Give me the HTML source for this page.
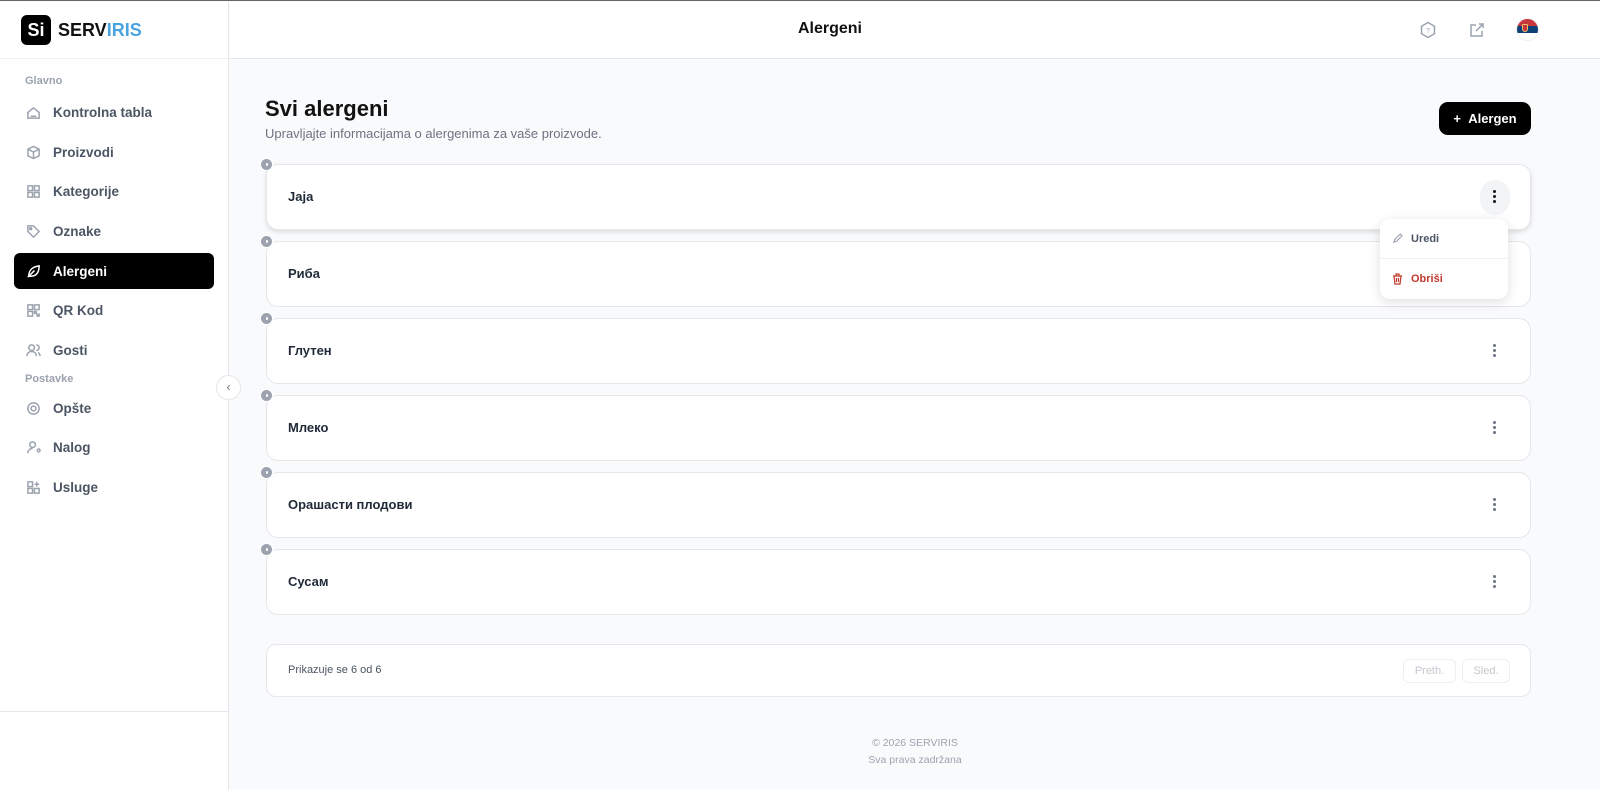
<!DOCTYPE html>
<html><head><meta charset="utf-8"><style>
*{box-sizing:border-box;margin:0;padding:0}
body{width:1600px;height:789px;overflow:hidden;font-family:"Liberation Sans",sans-serif;background:#f9fafb;position:relative;border-top:1px solid #666}
.side{position:absolute;left:0;top:1px;width:229px;height:788px;background:#fff;border-right:1px solid #e5e7eb}
.logo{height:57px;border-bottom:1px solid #eef0f2;display:flex;align-items:center;padding-left:21px}
.lb{width:30px;height:30px;background:#000;border-radius:6px;color:#fff;font-weight:bold;font-size:18px;display:flex;align-items:center;justify-content:center}
.lt{margin-left:7px;font-weight:bold;font-size:18px;color:#111}
.lt span{color:#4aa3df}
.sec{position:absolute;left:25px;font-size:11px;font-weight:bold;color:#9ca3af}
.it{position:absolute;left:14px;width:200px;height:36px;border-radius:6px;display:flex;align-items:center;padding-left:12px;font-size:13.5px;font-weight:bold;color:#4b5563}
.it svg{width:15px;height:15px;margin-right:12px;stroke:#9ca3af;fill:none;stroke-width:1.6}
.it.act{background:#000;color:#fff}
.it.act svg{stroke:#fff}
.hdr{position:absolute;left:230px;top:1px;right:0;height:57px;background:#fff;border-bottom:1px solid #e5e7eb}
.ttl{position:absolute;left:530px;width:140px;top:18px;text-align:center;font-size:16px;font-weight:bold;color:#111}
.card{position:absolute;left:266px;width:1265px;height:66px;background:#fff;border:1px solid #e5e7eb;border-radius:12px;font-size:13px;font-weight:bold;color:#1f2937;padding:24px 0 0 21px}
.dot{position:absolute;left:-7px;top:-7px;width:13px;height:13px;border-radius:50%;background:#9ca3af;border:1px solid #fff}
.dot:after{content:"";position:absolute;left:5px;top:4px;width:2px;height:3px;background:#fff;border-radius:1px}
.km{position:absolute;right:34px;top:25px;width:3px}
.km i{display:block;width:3px;height:3px;border-radius:50%;background:#6b7280;margin-bottom:2px}
</style></head><body>
<div class="side">
<div class="logo"><div class="lb">Si</div><div class="lt">SERV<span>IRIS</span></div></div>
<div class="sec" style="top:73px">Glavno</div>
<div class="it" style="top:92px"><svg viewBox="0 0 16 16"><path d="M2 8l6-5 6 5v6H2z"/><path d="M5 12h6"/></svg>Kontrolna tabla</div>
<div class="it" style="top:132px"><svg viewBox="0 0 16 16"><path d="M8 1.5l6 3v7l-6 3-6-3v-7z"/><path d="M2 4.5l6 3 6-3M8 7.5v7"/></svg>Proizvodi</div>
<div class="it" style="top:171px"><svg viewBox="0 0 16 16"><rect x="2" y="2" width="5" height="5"/><rect x="9" y="2" width="5" height="5"/><rect x="2" y="9" width="5" height="5"/><rect x="9" y="9" width="5" height="5"/></svg>Kategorije</div>
<div class="it" style="top:211px"><svg viewBox="0 0 16 16"><path d="M2 2h6l6 6-6 6-6-6z"/><circle cx="5" cy="5" r="1"/></svg>Oznake</div>
<div class="it act" style="top:251px"><svg viewBox="0 0 16 16"><path d="M3 13C3 6 7 3 14 2c0 7-3 11-9 11z"/><path d="M2 14l7-7"/></svg>Alergeni</div>
<div class="it" style="top:290px"><svg viewBox="0 0 16 16"><rect x="2" y="2" width="5" height="5"/><rect x="9" y="2" width="5" height="5"/><rect x="2" y="9" width="5" height="5"/><path d="M9 9h2v2H9zM12 12h2v2h-2z"/></svg>QR Kod</div>
<div class="it" style="top:330px"><svg viewBox="0 0 16 16"><circle cx="6" cy="5" r="3"/><path d="M1 14c0-3 2-5 5-5s5 2 5 5M11 2a3 3 0 010 6M13 10c1 1 2 2 2 4"/></svg>Gosti</div>
<div class="sec" style="top:371px">Postavke</div>
<div class="it" style="top:388px"><svg viewBox="0 0 16 16"><circle cx="8" cy="8" r="2.5"/><circle cx="8" cy="8" r="6"/></svg>Opšte</div>
<div class="it" style="top:427px"><svg viewBox="0 0 16 16"><circle cx="7" cy="5" r="3"/><path d="M2 14c0-3 2-5 5-5M12 11a1.5 1.5 0 110 .1"/></svg>Nalog</div>
<div class="it" style="top:467px"><svg viewBox="0 0 16 16"><rect x="2" y="2" width="5" height="5"/><rect x="2" y="9" width="5" height="5"/><rect x="9" y="9" width="5" height="5"/><path d="M11.5 2v5M9 4.5h5"/></svg>Usluge</div>
<div style="position:absolute;left:0;right:0;top:709px;border-top:1px solid #e5e7eb"></div>
</div>
<div style="position:absolute;left:216px;top:374px;width:25px;height:25px;border-radius:50%;background:#fff;border:1px solid #e5e7eb;font-size:12px;color:#6b7280;text-align:center;line-height:22px">‹</div>
<div class="hdr"><div class="ttl">Alergeni</div>
<svg style="position:absolute;left:1189px;top:19px" width="18" height="18" viewBox="0 0 18 18" fill="none" stroke="#9ca3af" stroke-width="1.5"><path d="M9 1.5l6.5 3.75v7.5L9 16.5l-6.5-3.75v-7.5z"/><text x="9" y="12" font-size="7" text-anchor="middle" fill="#9ca3af" stroke="none" font-family="Liberation Sans">?</text></svg>
<svg style="position:absolute;left:1239px;top:20px" width="16" height="16" viewBox="0 0 16 16" fill="none" stroke="#9ca3af" stroke-width="1.5"><path d="M7 3H2v11h11V9M10 2h4v4M14 2L7 9"/></svg>
<div style="position:absolute;left:1287px;top:17px;width:21px;height:21px;border-radius:50%;overflow:hidden;box-shadow:0 0 0 1px #eee;background:linear-gradient(#c6363c 0 33%,#0c4076 33% 66%,#fff 66%)"><div style="position:absolute;left:5px;top:5px;width:6px;height:8px;background:#c6363c;border:1px solid #e8c26b;border-radius:1px 1px 3px 3px"></div></div>
</div>
<div style="position:absolute;left:265px;top:95px;font-size:22px;font-weight:bold;color:#111">Svi alergeni</div>
<div style="position:absolute;left:265px;top:125px;font-size:13px;color:#6b7280">Upravljajte informacijama o alergenima za vaše proizvode.</div>
<div style="position:absolute;left:1439px;top:101px;width:92px;height:33px;background:#000;border-radius:9px;color:#fff;font-size:13px;font-weight:bold;line-height:33px;text-align:center">+&nbsp;&nbsp;Alergen</div>

<div class="card" style="top:163px;box-shadow:0 2px 5px rgba(0,0,0,.12)"><div class="dot"></div>Jaja<div style="position:absolute;right:20px;top:15px;width:30px;height:35px;border-radius:15px;background:#f3f4f6"></div><div class="km" style="right:34px"><i style="background:#111"></i><i style="background:#111"></i><i style="background:#111"></i></div></div>
<div class="card" style="top:240px"><div class="dot"></div>Риба</div>
<div class="card" style="top:317px"><div class="dot"></div>Глутен<div class="km"><i></i><i></i><i></i></div></div>
<div class="card" style="top:394px"><div class="dot"></div>Млеко<div class="km"><i></i><i></i><i></i></div></div>
<div class="card" style="top:471px"><div class="dot"></div>Орашасти плодови<div class="km"><i></i><i></i><i></i></div></div>
<div class="card" style="top:548px"><div class="dot"></div>Сусам<div class="km"><i></i><i></i><i></i></div></div>

<div style="position:absolute;left:1380px;top:218px;width:128px;height:80px;background:#fff;border-radius:10px;box-shadow:0 3px 12px rgba(0,0,0,.13);font-size:11px;font-weight:bold">
<svg style="position:absolute;left:12px;top:14px" width="11" height="11" viewBox="0 0 12 12" fill="none" stroke="#9ca3af" stroke-width="1.2"><path d="M2 10l1-3 6-6 2 2-6 6z"/></svg>
<div style="position:absolute;left:31px;top:14px;color:#4b5563">Uredi</div>
<div style="position:absolute;left:0;right:0;top:39px;border-top:1px solid #f0f0f0"></div>
<svg style="position:absolute;left:12px;top:54px" width="11" height="12" viewBox="0 0 11 12" fill="none" stroke="#c0392b" stroke-width="1.2"><path d="M1 3h9M4 3V1h3v2M2 3l1 8h5l1-8M4.5 5v4M6.5 5v4"/></svg>
<div style="position:absolute;left:31px;top:54px;color:#c0392b">Obriši</div>
</div>

<div style="position:absolute;left:266px;top:643px;width:1265px;height:53px;background:#fff;border:1px solid #e5e7eb;border-radius:10px">
<div style="position:absolute;left:21px;top:19px;font-size:11px;color:#4b5563">Prikazuje se 6 od 6</div>
<div style="position:absolute;left:1136px;top:14px;width:53px;height:24px;border:1px solid #eee;border-radius:6px;font-size:11px;color:#c4c7cc;text-align:center;line-height:22px">Preth.</div>
<div style="position:absolute;left:1195px;top:14px;width:48px;height:24px;border:1px solid #eee;border-radius:6px;font-size:11px;color:#c4c7cc;text-align:center;line-height:22px">Sled.</div>
</div>
<div style="position:absolute;left:230px;right:0;top:734px;text-align:center;font-size:10.5px;color:#9ca3af;line-height:17px">© 2026 SERVIRIS<br>Sva prava zadržana</div>
</body></html>
